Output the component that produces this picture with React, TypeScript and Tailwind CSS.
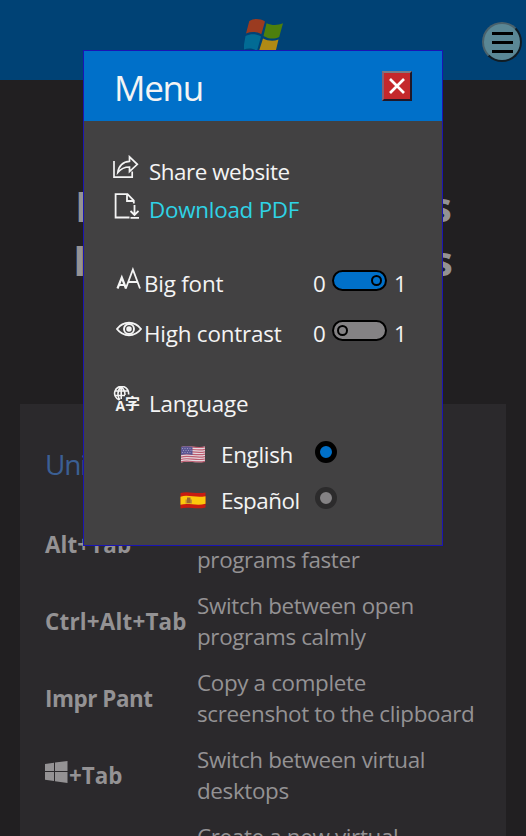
import type { ReactNode } from "react";

const shortcuts: { keys: ReactNode; tracking: string; lines: [string, string] }[] = [
  { keys: "Alt+Tab", tracking: "tracking-[0.1px]", lines: ["Switch between", "programs faster"] },
  { keys: "Ctrl+Alt+Tab", tracking: "tracking-[0.2px]", lines: ["Switch between open", "programs calmly"] },
  { keys: "Impr Pant", tracking: "tracking-[-0.45px]", lines: ["Copy a complete", "screenshot to the clipboard"] },
  {
    keys: (
      <>
        <svg className="mr-[1px] -mt-[7px] h-[22px] w-[23px]" viewBox="0 0 23 22" fill="currentColor">
          <path d="M0 3.1 9 1.8V10H0zM10 1.6 22.5 0V10H10zM0 11H9V20L0 18.8zM10 11H22.5V22L10 20.3z" />
        </svg>
        +Tab
      </>
    ),
    tracking: "tracking-normal",
    lines: ["Switch between virtual", "desktops"],
  },
  { keys: "", tracking: "tracking-normal", lines: ["Create a new virtual", "desktop"] },
];

function XpLogo() {
  return (
    <svg className="ml-[1px] mt-[18px] h-[36px] w-[40px]" viewBox="0 0 40 36">
      <path fill="#9b3b20" d="M5.3 3C10 .2 15.500 .2 21 3.400L17.300 16.300C12.500 13.500 7.500 13.500 2 15.500z" />
      <path fill="#4d7f0d" d="M22.500 5.200C28 7.600 33.500 7.500 39 5.300L35.200 19C30 21.500 24.500 21 19.500 18z" />
      <path fill="#026b94" d="M1.500 18C7 15.500 12 15.800 17 18.500L13 33C9 30 3.500 30-1 32z" />
      <path fill="#b08a14" d="M19 20.500C24 23 29.500 23.500 34.500 21.500L31 36C25 37 19 36 15 33z" />
    </svg>
  );
}

function ShareIcon() {
  return (
    <svg className="-mt-2 h-[24px] w-[26px]" viewBox="0 0 26 24" fill="none" stroke="currentColor" strokeWidth="1.7">
      <path d="M1 6V22.200H19.200V16.500M4.800 17.500C5.500 11 10 6.500 16.500 6.300V1.800L24.300 9.300L16.500 16.500V12C11.500 12 8 13.500 4.800 17.500z" />
    </svg>
  );
}

function DownloadIcon() {
  return (
    <svg className="-mt-1.5 h-[26px] w-[26px]" viewBox="0 0 26 26" fill="none" stroke="currentColor" strokeWidth="1.8">
      <path d="M16.500 24.500H2.600V1.200H14.500L20.800 7.500V10.500M14 1.500V8H20.500M21.500 12V21.500M17.500 18L21.500 22L25.500 18M17.500 24.800H26" />
    </svg>
  );
}

function FontIcon() {
  return (
    <svg className="-mt-2 h-[24px] w-[26px]" viewBox="0 0 26 24" fill="none" stroke="currentColor">
      <path strokeWidth="2.200" d="M1.500 21.500 5.800 10.500 10 21.500M3 18H8.300" />
      <path strokeWidth="1.800" d="M9.800 21.500 16.900 2.500 24 21.500M12.500 15H21.500" />
    </svg>
  );
}

function EyeIcon() {
  return (
    <svg className="-mt-2 h-[16px] w-[26px]" viewBox="0 0 26 16" fill="none" stroke="currentColor" strokeWidth="1.900">
      <path d="M1 8C4 4 8 1.800 13 1.800S22 4 25 8C22 12 18 14.200 13 14.200S4 12 1 8z" />
      <circle cx="13" cy="8" r="5" />
      <circle cx="13" cy="8" r="1.800" fill="currentColor" />
    </svg>
  );
}

function LanguageIcon() {
  return (
    <svg className="-mt-2 h-[26px] w-[27px]" viewBox="0 0 27 26" fill="none" stroke="currentColor" strokeWidth="1.600">
      <path d="M6 13.800A7 7 0 1 1 15.500 8.500M8.200 1C4.200 4 4.200 10 6.700 14M8.200 1C11 3 12 5.500 12 9M8.200 1V13M2.200 5H15M1.500 9.500H12" />
      <text x="2.500" y="25" fill="currentColor" stroke="none" className="font-['Open_Sans',sans-serif] text-[14px] font-bold">A</text>
      <text x="12" y="23" fill="currentColor" stroke="none" className="font-['Noto_Sans_CJK_SC',sans-serif] text-[15px] font-bold">字</text>
    </svg>
  );
}

function UsFlag() {
  return (
    <svg className="h-[19px] w-[26px]" viewBox="0 0 26 19">
      <path fill="#e5d9df" d="M1 2C8-.5 16 3.500 25 1.500V16.500C16 19 8 15 1 17.500z" />
      <path fill="none" stroke="#bd5c70" strokeWidth="1.200" d="M1 2.500C8 0 16 4 25 2M1 4.900C8 2.400 16 6.400 25 4.400M1 7.300C8 4.800 16 8.800 25 6.800M1 9.700C8 7.200 16 11.200 25 9.200M1 12.100C8 9.600 16 13.600 25 11.600M1 14.500C8 12 16 16 25 14M1 16.900C8 14.400 16 18.400 25 16.400" />
      <path fill="#5c5793" d="M1 2C5 .7 9 1.200 12.500 2V10C9 9.200 5 9 1 10z" />
      <path stroke="#aaa5c5" strokeWidth=".8" strokeDasharray="1 1.500" d="M2 3.500H12M3 5.500H12M2 7.500H12" />
    </svg>
  );
}

function SpainFlag() {
  return (
    <svg className="h-[19px] w-[26px]" viewBox="0 0 26 19">
      <path fill="#c81c10" d="M0.500 2C8-.5 16 3.500 25.500 1.500V16.500C16 19 8 15 0.500 17.500z" />
      <path fill="#fcc80c" d="M0.500 5.700C8 3.200 16 7.200 25.500 5.200V12.800C16 15.300 8 11.300 0.500 13.800z" />
      <path fill="#c09030" d="M5.500 8.500H12V12.500H5.500z" />
      <path fill="#9a6830" d="M7 6.500H10.500V12H7z" />
    </svg>
  );
}

function Toggle({ on }: { on: boolean }) {
  return (
    <span
      className={
        on
          ? "-mt-[6px] flex h-[21px] w-[55px] items-center justify-end rounded-full border-2 border-black bg-[#0070c9] px-[3px]"
          : "-mt-[6px] flex h-[21px] w-[55px] items-center rounded-full border-2 border-black bg-[#848284] px-[3px]"
      }
    >
      <span className="size-[11px] rounded-full border-2 border-black" />
    </span>
  );
}

function Setting({ icon, label, on }: { icon: ReactNode; label: ReactNode; on: boolean }) {
  return (
    <div className="flex h-[50px] items-center pl-[3px]">
      {icon}
      <span className="ml-[2px] w-[169px] tracking-[-0.2px]">{label}</span>
      <span className="w-[19px]">0</span>
      <Toggle on={on} />
      <span className="ml-[7px]">1</span>
    </div>
  );
}

function MenuDialog() {
  return (
    <div className="absolute left-[83px] top-[50px] h-[496px] w-[360px] border border-[#1a14b4] bg-[#424142] text-[#f4f4f4]">
      <div className="flex h-[70px] items-center justify-between bg-[#0070c9] pl-[30px] pr-[30px]">
        <h2 className="mt-[3px] text-[35px] leading-[48px] tracking-[-1.3px]">Menu</h2>
        <button className="flex size-[30px] items-center justify-center border-2 border-b-[#201828] border-l-[#8a6070] border-r-[#201828] border-t-[#7c7c84] bg-[#c4282c]">
          <svg className="size-[16px]" viewBox="0 0 16 16" stroke="white" strokeWidth="2.700">
            <path d="M1 1 15 15M15 1 1 15" />
          </svg>
        </button>
      </div>
      <div className="pl-[29px] pt-[31px]">
        <div className="flex h-[38px] items-center gap-[10px]"><ShareIcon /><span className="tracking-[-0.46px]">Share website</span></div>
        <div className="flex h-[38px] items-center gap-[10px]"><DownloadIcon /><a className="tracking-[-0.25px] text-[#2fd3e6]">Download PDF</a></div>
        <div className="mt-[30px]">
          <Setting icon={<FontIcon />} label="Big font" on />
          <Setting icon={<EyeIcon />} label="High contrast" on={false} />
        </div>
        <div className="mt-[25px] flex h-[40px] items-center gap-[9px]"><LanguageIcon /><span className="tracking-[-0.2px]">Language</span></div>
        <div className="mt-[8px] flex h-[46px] items-center pl-[67px]">
          <UsFlag />
          <span className="ml-[15px] w-[94px] tracking-[-0.3px]">English</span>
          <span className="-mt-[5px] size-[22px] rounded-full border-[5px] border-black bg-[#0070c9]" />
        </div>
        <div className="flex h-[46px] items-center pl-[67px]">
          <SpainFlag />
          <span className="ml-[15px] w-[94px] tracking-[-0.5px]">Español</span>
          <span className="-mt-[5px] size-[22px] rounded-full border-[5px] border-[#2c2b2c] bg-[#848284]" />
        </div>
      </div>
    </div>
  );
}

export default function App() {
  return (
    <div className="relative h-[836px] w-[526px] overflow-hidden whitespace-nowrap bg-[#211f21] font-['Open_Sans',sans-serif] text-[22.4px] leading-[31px] text-[#949294]">
      <header className="grid h-[80px] grid-cols-[1fr_40px_1fr] bg-[#004275]">
        <span />
        <XpLogo />
        <button className="mr-[4px] mt-[22px] flex size-[40px] flex-col items-center justify-center gap-[6px] justify-self-end rounded-full border-2 border-b-[#101c24] border-l-[#4a626c] border-r-[#101c24] border-t-[#4a626c] bg-[#5a8795]">
          <span className="h-[3px] w-[21px] bg-black" />
          <span className="h-[3px] w-[21px] bg-black" />
          <span className="h-[3px] w-[21px] bg-black" />
        </button>
      </header>
      <h1 className="h-[324px] pl-[73px] pr-[73px] pt-[99px] text-[41px] font-bold leading-[54px]">
        <span className="flex justify-between pl-[2px] pr-[1px]"><span>Key</span><span>shortcuts</span></span>
        <span className="flex justify-between"><span>In</span><span>Windows</span></span>
      </h1>
      <main className="mx-[20px] h-[432px] bg-[#2b292c] px-[25px]">
        <h2 className="h-[109px] pt-[45px] text-[28px] tracking-[-1.2px] text-[#3b5f94]">Universal</h2>
        <div className="grid gap-y-[15px]">
          {shortcuts.map((s, i) => (
            <div key={i} className="grid h-[62px] grid-cols-[152px_1fr] items-center">
              <strong className={`flex items-center font-bold ${s.tracking}`}>{s.keys}</strong>
              <p className="tracking-[-0.34px]">{s.lines[0]}<br />{s.lines[1]}</p>
            </div>
          ))}
        </div>
      </main>
      <MenuDialog />
    </div>
  );
}
